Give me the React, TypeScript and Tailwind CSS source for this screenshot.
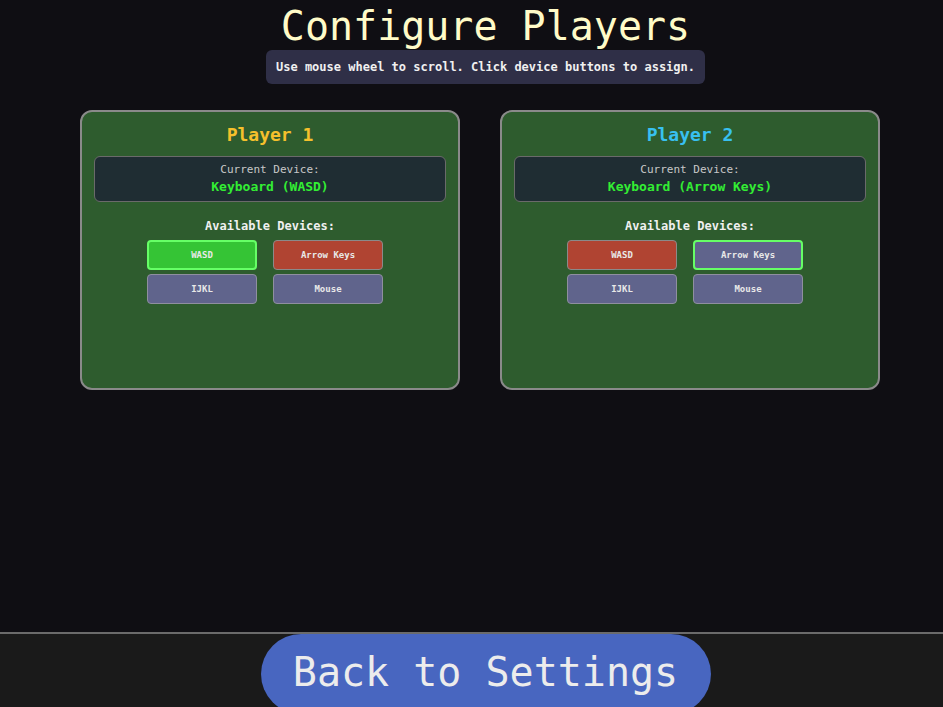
import React from "react";

type Dev = { name: string; kind: "sel" | "selfree" | "taken" | "free" };

function DeviceButton({ d }: { d: Dev }) {
  const cls =
    d.kind === "sel"
      ? "bg-[#35c435] border-2 border-[#66ff66]"
      : d.kind === "selfree"
      ? "bg-[#60648c] border-2 border-[#66ff66]"
      : d.kind === "taken"
      ? "bg-[#b04432] border border-[#8a8a8a]"
      : "bg-[#60648c] border border-[#8f8f9f]";
  return (
    <div
      className={`w-[110px] h-[30px] rounded-[4px] flex items-center justify-center text-[9px] font-bold text-[#e8e8e8] pt-[1px] ${cls}`}
    >
      {d.name}
    </div>
  );
}

function Card({
  title,
  color,
  current,
  devices,
}: {
  title: string;
  color: string;
  current: string;
  devices: Dev[];
}) {
  return (
    <div className="w-[380px] h-[280px] rounded-[12px] border-2 border-[#8a8a8a] bg-[#2e5c2e] flex flex-col items-center pt-[11px] px-[12px]">
      <div className={`text-[18px] leading-[24px] font-bold ${color}`}>{title}</div>
      <div className="mt-[9px] w-full h-[46px] rounded-[6px] border border-[#6a6a6a] bg-[#1f2d33] flex flex-col items-center pt-[5px]">
        <div className="text-[11px] leading-[16px] text-[#c8c8c8]">Current Device:</div>
        <div className="text-[13px] leading-[18px] font-bold text-[#33ee33]">{current}</div>
      </div>
      <div className="mt-[15px] text-[12px] leading-[18px] font-bold text-[#f0f0f0]">Available Devices:</div>
      <div className="mt-[5px] grid grid-cols-[110px_110px] gap-x-[16px] gap-y-[4px] mr-[10px]">
        {devices.map((d) => (
          <DeviceButton key={d.name} d={d} />
        ))}
      </div>
    </div>
  );
}

export default function App() {
  return (
    <div
      className="w-[943px] h-[707px] overflow-hidden bg-[#0f0e13] flex flex-col"
      style={{ fontFamily: '"DejaVu Sans Mono", "Liberation Mono", monospace' }}
    >
      <div className="flex flex-col items-center pl-[28px] pr-0">
        <div className="h-[50px] leading-[52px] text-[40px] font-medium text-[#fffbc8]">Configure Players</div>
        <div className="h-[34px] px-[10px] rounded-[6px] bg-[#2f2f47] flex items-center text-[12px] font-bold text-[#f0f0f0]">
          Use mouse wheel to scroll. Click device buttons to assign.
        </div>
      </div>
      <div className="flex gap-[40px] pl-[80px] mt-[26px]">
        <Card
          title="Player 1"
          color="text-[#f5c02c]"
          current="Keyboard (WASD)"
          devices={[
            { name: "WASD", kind: "sel" },
            { name: "Arrow Keys", kind: "taken" },
            { name: "IJKL", kind: "free" },
            { name: "Mouse", kind: "free" },
          ]}
        />
        <Card
          title="Player 2"
          color="text-[#38c0f0]"
          current="Keyboard (Arrow Keys)"
          devices={[
            { name: "WASD", kind: "taken" },
            { name: "Arrow Keys", kind: "selfree" },
            { name: "IJKL", kind: "free" },
            { name: "Mouse", kind: "free" },
          ]}
        />
      </div>
      <div className="flex-1" />
      <div className="h-[75px] shrink-0 border-t-2 border-[#6b6b6b] bg-[#1a1a1a] flex justify-center pl-[28px]">
        <div className="w-[450px] h-[80px] shrink-0 rounded-full bg-[#4866c0] flex items-center justify-center text-[40px] leading-[76px] text-[#ececec] pb-[5px]">
          Back to Settings
        </div>
      </div>
    </div>
  );
}
